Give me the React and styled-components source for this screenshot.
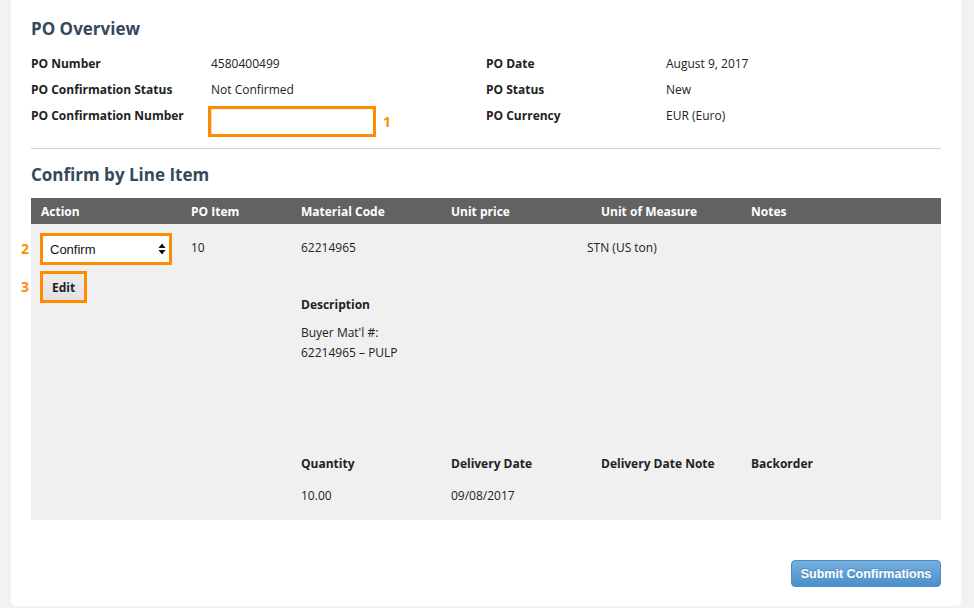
import React from "react";
import styled, { createGlobalStyle } from "styled-components";

const Global = createGlobalStyle`
  html, body { margin: 0; padding: 0; background: #f2f2f2; }
  body { font-family: "Open Sans", "DejaVu Sans", sans-serif; font-size: 12px; color: #222; }
  * { box-sizing: border-box; }
`;

const ORANGE = "#ff8c00";

const Page = styled.div`
  height: 608px;
  padding: 0 13px 2px 11px;
  display: flex;
  flex-direction: column;
`;

const Card = styled.div`
  flex: 1;
  background: #fff;
  border-radius: 0 0 5px 5px;
  padding: 19px 20px 19px;
  display: flex;
  flex-direction: column;
`;

const SectionTitle = styled.h2`
  margin: ${(p) => p.$mt || 0}px 0 0;
  font-size: 17px;
  line-height: 20px;
  font-weight: 700;
  color: #34495e;
`;

const Overview = styled.div`
  margin-top: 12px;
  display: grid;
  grid-template-columns: 455px 455px;
`;

const InfoCol = styled.div`
  display: flex;
  flex-direction: column;
`;

const InfoRow = styled.div`
  display: grid;
  grid-template-columns: 180px 1fr;
  align-items: start;
  min-height: 26px;
`;

const Label = styled.div`
  font-weight: 700;
  line-height: 26px;
  color: #222;
`;

const Value = styled.div`
  line-height: 26px;
  color: #222;
`;

const Annotated = styled.div`
  position: relative;
  display: inline-flex;
  border: 3px solid ${ORANGE};
  margin: ${(p) => p.$m || "0"};
`;

const Marker = styled.span`
  position: absolute;
  top: 50%;
  transform: translateY(-50%);
  ${(p) => (p.$side === "left" ? "right: calc(100% + 14px);" : "left: calc(100% + 10px);")}
  color: ${ORANGE};
  font-weight: 700;
  font-size: 14px;
  line-height: 16px;
`;

const TextInput = styled.input`
  width: 162px;
  height: 25px;
  border: none;
  border-left: 1px solid #ddd;
  box-shadow: inset 0 1px 1px rgba(0, 0, 0, 0.06);
  outline: none;
  padding: 0 6px;
  font: inherit;
  background: #fff;
`;

const Divider = styled.hr`
  margin: 11px 0 0;
  border: none;
  border-top: 1px solid #d3d3d3;
  height: 0;
`;

const Table = styled.div`
  margin-top: 13px;
  display: flex;
  flex-direction: column;
`;

const HeaderRow = styled.div`
  display: grid;
  grid-template-columns: 150px 110px 150px 150px 150px 1fr;
  background: #626262;
  height: 26px;
  align-items: center;
`;

const HeadCell = styled.div`
  padding-left: 10px;
  color: #fff;
  font-weight: 700;
`;

const Body = styled.div`
  background: #f0f0f0;
  display: flex;
  padding: 9px 0 14px;
`;

const ActionCol = styled.div`
  width: 150px;
  padding-left: 9px;
  display: flex;
  flex-direction: column;
  align-items: flex-start;
  gap: 6px;
`;

const SelectWrap = styled.div`
  position: relative;
  display: flex;
`;

const Select = styled.select`
  appearance: none;
  -webkit-appearance: none;
  width: 126px;
  height: 26px;
  border: none;
  border-radius: 0;
  background: #fff;
  padding: 0 20px 0 7px;
  font-family: "Liberation Sans", Arial, sans-serif;
  font-size: 13px;
  color: #111;
  outline: none;
`;

const SelectArrows = styled.svg`
  position: absolute;
  right: 3px;
  top: 7px;
  pointer-events: none;
`;

const EditButton = styled.button`
  width: 41px;
  height: 26px;
  border: none;
  background: linear-gradient(#ededed, #e2e2e2);
  font-family: inherit;
  font-size: 12px;
  font-weight: 700;
  color: #222;
  padding: 0;
`;

const Details = styled.div`
  flex: 1;
  padding-top: 5px;
  display: flex;
  flex-direction: column;
`;

const ItemRow = styled.div`
  display: grid;
  grid-template-columns: 110px 150px 150px 150px 1fr;
  line-height: 20px;
`;

const Cell = styled.div`
  padding-left: 10px;
  margin-left: ${(p) => p.$shift || 0}px;
  font-weight: ${(p) => (p.$bold ? 700 : 400)};
  color: #222;
`;

const DescBlock = styled.div`
  margin: 37px 0 0 120px;
  display: flex;
  flex-direction: column;
  line-height: 20px;
`;

const DescLabel = styled.div`
  font-weight: 700;
  margin-bottom: 8px;
`;

const QtyGrid = styled.div`
  margin: 91px 0 0 110px;
  display: grid;
  grid-template-columns: 150px 150px 150px 1fr;
  row-gap: 12px;
  line-height: 20px;
`;

const Footer = styled.div`
  margin-top: auto;
  display: flex;
  justify-content: flex-end;
`;

const SubmitButton = styled.button`
  width: 150px;
  height: 27px;
  border: 1px solid #4d8dc6;
  border-radius: 4px;
  background: linear-gradient(#74afde, #4a90cc);
  color: #fff;
  font-family: "Liberation Sans", Arial, sans-serif;
  font-weight: 700;
  font-size: 12.5px;
  text-shadow: 0 -1px 0 rgba(0, 0, 0, 0.2);
  padding: 0;
`;

function Arrows() {
  return (
    <SelectArrows width="8" height="12" viewBox="0 0 8 12">
      <path d="M4 0.5 L7.5 5 H0.5 Z" fill="#111" />
      <path d="M4 11.5 L7.5 7 H0.5 Z" fill="#111" />
    </SelectArrows>
  );
}

export default function App() {
  return (
    <>
      <Global />
      <Page>
        <Card>
          <SectionTitle>PO Overview</SectionTitle>
          <Overview>
            <InfoCol>
              <InfoRow>
                <Label>PO Number</Label>
                <Value>4580400499</Value>
              </InfoRow>
              <InfoRow>
                <Label>PO Confirmation Status</Label>
                <Value>Not Confirmed</Value>
              </InfoRow>
              <InfoRow>
                <Label>PO Confirmation Number</Label>
                <div>
                  <Annotated $m="3px 0 0 -3px">
                    <TextInput type="text" aria-label="PO Confirmation Number" />
                    <Marker>1</Marker>
                  </Annotated>
                </div>
              </InfoRow>
            </InfoCol>
            <InfoCol>
              <InfoRow>
                <Label>PO Date</Label>
                <Value>August 9, 2017</Value>
              </InfoRow>
              <InfoRow>
                <Label>PO Status</Label>
                <Value>New</Value>
              </InfoRow>
              <InfoRow>
                <Label>PO Currency</Label>
                <Value>EUR (Euro)</Value>
              </InfoRow>
            </InfoCol>
          </Overview>
          <Divider />
          <SectionTitle $mt={16}>Confirm by Line Item</SectionTitle>
          <Table>
            <HeaderRow>
              <HeadCell>Action</HeadCell>
              <HeadCell>PO Item</HeadCell>
              <HeadCell>Material Code</HeadCell>
              <HeadCell>Unit price</HeadCell>
              <HeadCell>Unit of Measure</HeadCell>
              <HeadCell>Notes</HeadCell>
            </HeaderRow>
            <Body>
              <ActionCol>
                <Annotated>
                  <SelectWrap>
                    <Select defaultValue="confirm">
                      <option value="confirm">Confirm</option>
                      <option value="reject">Reject</option>
                    </Select>
                    <Arrows />
                  </SelectWrap>
                  <Marker $side="left">2</Marker>
                </Annotated>
                <Annotated>
                  <EditButton>Edit</EditButton>
                  <Marker $side="left">3</Marker>
                </Annotated>
              </ActionCol>
              <Details>
                <ItemRow>
                  <Cell>10</Cell>
                  <Cell>62214965</Cell>
                  <Cell></Cell>
                  <Cell $shift={-14}>STN (US ton)</Cell>
                  <Cell></Cell>
                </ItemRow>
                <DescBlock>
                  <DescLabel>Description</DescLabel>
                  <div>Buyer Mat'l #:</div>
                  <div>62214965 – PULP</div>
                </DescBlock>
                <QtyGrid>
                  <Cell $bold>Quantity</Cell>
                  <Cell $bold>Delivery Date</Cell>
                  <Cell $bold>Delivery Date Note</Cell>
                  <Cell $bold>Backorder</Cell>
                  <Cell>10.00</Cell>
                  <Cell>09/08/2017</Cell>
                  <Cell></Cell>
                  <Cell></Cell>
                </QtyGrid>
              </Details>
            </Body>
          </Table>
          <Footer>
            <SubmitButton>Submit Confirmations</SubmitButton>
          </Footer>
        </Card>
      </Page>
    </>
  );
}
